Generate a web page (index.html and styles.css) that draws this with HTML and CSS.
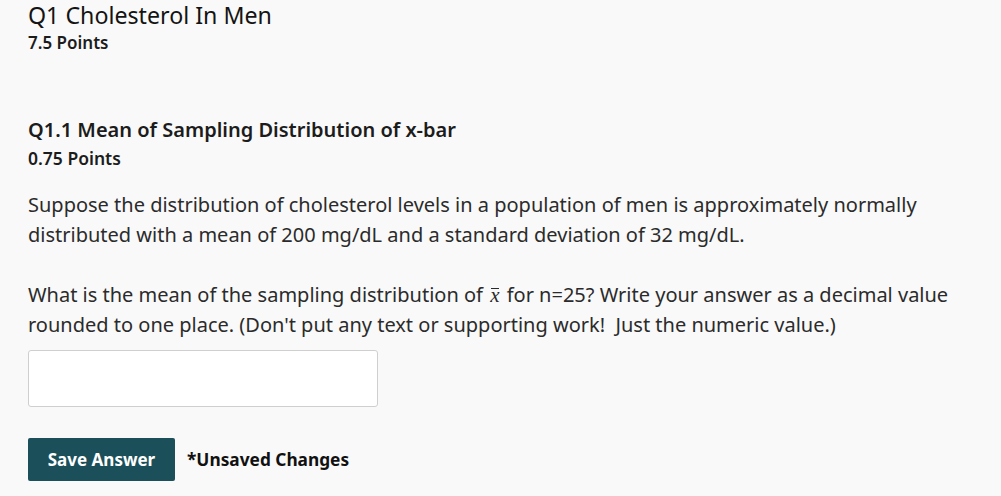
FILE: index.html
```html
<!DOCTYPE html>
<html lang="en">
<head>
<meta charset="utf-8">
<title>Q1 Cholesterol In Men</title>
<link rel="stylesheet" href="styles.css">
</head>
<body>
<main class="question">
  <header class="q-head">
    <h1 class="q-title">Q1 Cholesterol In Men</h1>
    <div class="q-points">7.5 Points</div>
  </header>
  <section class="subq">
    <h2 class="subq-title">Q1.1 Mean of Sampling Distribution of x-bar</h2>
    <div class="subq-points">0.75 Points</div>
    <div class="prompt">
      <p>Suppose the distribution of cholesterol levels in a population of men is approximately normally distributed with a mean of 200 mg/dL and a standard deviation of 32 mg/dL.</p>
      <p>What is the mean of the sampling distribution of <span class="xbar">x</span> for n=25? Write your answer as a decimal value rounded to one place. (Don't put any text or supporting work!&nbsp; Just the numeric value.)</p>
    </div>
    <input class="answer" type="text" aria-label="Answer">
    <div class="actions">
      <button class="save" type="button">Save Answer</button>
      <span class="unsaved">*Unsaved Changes</span>
    </div>
  </section>
</main>
</body>
</html>
```
FILE: styles.css
```css
html, body {
  margin: 0;
  padding: 0;
  background: #f9f9f9;
}
body {
  font-family: "Noto Sans", "Open Sans", sans-serif;
  color: #2b2b2b;
}
.question {
  padding: 0 28px;
}
.q-title {
  margin: 0;
  font-size: 23.2px;
  line-height: 30px;
  font-weight: 400;
  color: #141414;
}
.q-points {
  font-size: 17px;
  line-height: 26px;
  font-weight: 600;
  color: #1c1c1c;
}
.subq {
  padding-top: 61px;
}
.subq-title {
  margin: 0;
  font-size: 20px;
  line-height: 26px;
  font-weight: 600;
  color: #1c1c1c;
}
.subq-points {
  font-size: 17.5px;
  line-height: 30px;
  font-weight: 600;
  color: #1c1c1c;
}
.prompt {
  padding-top: 17px;
}
.prompt p {
  margin: 0 0 30px 0;
  font-size: 20px;
  line-height: 30px;
}
.prompt p:last-child {
  margin-bottom: 10px;
}
.xbar {
  position: relative;
  display: inline-block;
  font-family: "Liberation Serif", "DejaVu Serif", serif;
  font-style: italic;
  font-size: 21px;
  line-height: 20px;
  margin: 0 2px;
}
.xbar::before {
  content: "";
  position: absolute;
  left: 1px;
  right: 0;
  top: 3px;
  height: 1px;
  background: currentColor;
}
.answer {
  display: block;
  box-sizing: border-box;
  width: 350px;
  height: 57px;
  margin: 0;
  background: #fff;
  border: 1px solid #cfcfcf;
  border-radius: 3px;
  font: inherit;
}
.actions {
  display: flex;
  align-items: center;
  gap: 12px;
  margin-top: 31px;
}
.save {
  width: 147px;
  height: 43px;
  padding: 0;
  border: none;
  border-radius: 2px;
  background: #1b4f5a;
  color: #fff;
  font-family: "Noto Sans", "Open Sans", sans-serif;
  font-size: 17px;
  font-weight: 700;
}
.unsaved {
  font-size: 17.3px;
  font-weight: 700;
  color: #111;
}
```
